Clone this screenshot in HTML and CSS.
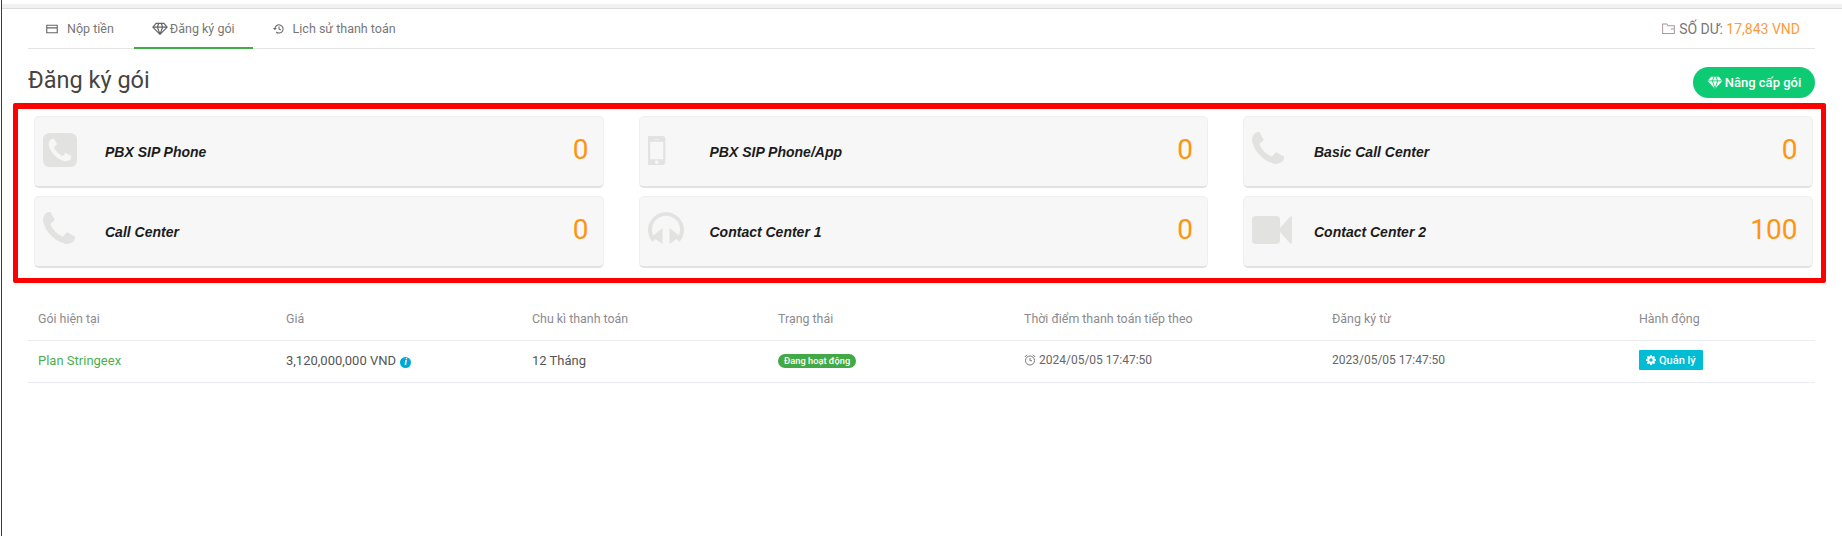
FILE: index.html
```html
<!DOCTYPE html>
<html lang="vi">
<head>
    <meta charset="UTF-8">
    <meta name="viewport" content="width=device-width, initial-scale=1.0">
    <title>Đăng ký gói</title>
    <link rel="stylesheet" href="styles.css">
</head>
<body>
    <svg class="icon-defs" width="0" height="0">
        <symbol id="i-phone" viewBox="192 128 1408 1408"><path d="M1600 1240q0 27-10 70.5t-21 68.5q-21 50-122 106-94 51-186 51-27 0-53-3.5t-57.5-12.5-47-14.5-55.5-20.5-49-18q-98-35-175-83-127-79-264-216t-216-264q-48-77-83-175-3-9-18-49t-20.5-55.5-14.5-47-12.5-57.5-3.5-53q0-92 51-186 56-101 106-122 25-11 68.5-21t70.5-10q14 0 21 3 18 6 53 76 11 19 30 54t35 63.5 31 53.5q3 4 17.5 25t21.5 35.5 7 28.5q0 20-28.5 50t-62 55-62 53-28.5 46q0 9 5 22.5t8.5 20.5 14 24 11.5 19q76 137 174 235t235 174q2 1 19 11.5t24 14 20.5 8.5 22.5 5q18 0 46-28.5t53-62 55-62 50-28.5q14 0 28.5 7t35.5 21.5 25 17.5q25 15 53.5 31t63.5 35 54 30q70 35 76 53 3 7 3 21z"/></symbol>
        <symbol id="i-diamond" viewBox="0 0 24 20"><path fill="none" stroke="currentColor" stroke-width="1.8" stroke-linejoin="round" d="M6 2h12l5 6-11 11L1 8zM1 8h22M8 8l4 11 4-11M8 8l2-6M16 8l-2-6"/></symbol>
        <symbol id="i-cog" viewBox="128 128 1536 1536"><path d="M1152 896q0-106-75-181t-181-75-181 75-75 181 75 181 181 75 181-75 75-181zm512-109v222q0 12-8 23t-20 13l-185 28q-19 54-39 91 35 50 107 138 10 12 10 25t-9 23q-27 37-99 108t-94 71q-12 0-26-9l-138-108q-44 23-91 38-16 136-29 186-7 28-36 28h-222q-14 0-24.5-8.5t-11.5-21.5l-28-184q-49-16-90-37l-141 107q-10 9-25 9-14 0-25-11-126-114-165-168-7-10-7-23 0-12 8-23 15-21 51-66.5t54-70.5q-27-50-41-99l-183-27q-13-2-21-12.5t-8-23.5v-222q0-12 8-23t19-13l186-28q14-46 39-92-40-57-107-138-10-12-10-24 0-10 9-23 26-36 98.5-107.5t94.5-71.5q13 0 26 10l138 107q44-23 91-38 16-136 29-186 7-28 36-28h222q14 0 24.5 8.5t11.5 21.5l28 184q49 16 90 37l142-107q9-9 24-9 13 0 25 10 129 119 165 170 7 8 7 22 0 12-8 23-15 21-51 66.5t-54 70.5q26 50 41 98l183 28q13 2 21 12.5t8 23.5z"/></symbol>
    </svg>

    <div class="top-band"></div>
    <div class="page">
        <div class="tabs">
            <div class="tab tab-first">
                <svg class="tab-icon" viewBox="0 0 16 12"><path fill="none" stroke="currentColor" stroke-width="1.5" d="M1 1h14v10H1zM1 4.500h14"/></svg>
                Nộp tiền
            </div>
            <div class="tab active">
                <svg class="tab-icon gem"><use href="#i-diamond"/></svg>
                Đăng ký gói
            </div>
            <div class="tab tab-last">
                <svg class="tab-icon" viewBox="0 0 16 16"><path fill="none" stroke="currentColor" stroke-width="1.4" d="M2.500 8a5.500 5.500 0 1 1 1.800 4M8 4.600V8l2.400 1.400"/><path fill="currentColor" d="M0 6.500h5L2.500 9.600z"/></svg>
                Lịch sử thanh toán
            </div>
            <div class="balance">
                <svg class="wallet" viewBox="0 0 14 12"><path fill="none" stroke="#a99" stroke-width="1.1" d="M.6 11.400V1h4.600l1.300 2h6.900v8.400zM9.500 6.500h4"/></svg>
                <span>SỐ DƯ: <span class="amount">17,843 VND</span></span>
            </div>
        </div>

        <div class="title-row">
            <h1>Đăng ký gói</h1>
            <div class="upgrade">
                <svg class="gem-solid" viewBox="0 0 24 20"><path fill="currentColor" d="M6 1h12l5.500 6.500L12 19.500.5 7.500z"/><path fill="none" stroke="#0ccb72" stroke-width="1.4" d="M.5 7.500h23M8 7.500l4 12 4-12M8 7.500L10.500 1M16 7.500L13.500 1"/></svg>
                Nâng cấp gói
            </div>
        </div>

        <div class="red-box">
            <div class="cards">
                <div class="card">
                    <svg class="card-icon square" viewBox="128 128 1536 1536"><path d="M1408 1193q0-11-2-16t-18-16.500-40.500-25-47.500-26.500-45.500-25-28.500-15q-5-3-19-13t-25-15-21-5q-15 0-36.500 20.500t-39.500 45-38.500 45-33.500 20.500q-7 0-16.500-3.500t-15.500-6.500-17-9.500-14-8.500q-99-55-170-126.500t-127-170.500q-2-3-8.500-14t-9.500-17-6.500-15.500-3.500-16.500q0-13 20.500-33.500t45-38.500 45-39.500 20.500-36.500q0-10-5-21t-15-25-13-19q-3-6-15-28.500t-25-45.500-26.500-47.500-25-40.500-16.500-18-16-2q-48 0-101 22-46 21-80 94.500t-34 130.500q0 16 2.500 34t5 30.500 9 33 10 29.500 12.500 33 11 30q60 164 216.500 320.500t320.500 216.500q6 2 30 11t33 12.500 29.500 10 33 9 30.500 5 34 2.500q57 0 130.500-34t94.500-80q22-53 22-101zm256-777v960q0 119-84.500 203.500t-203.500 84.500h-960q-119 0-203.500-84.500t-84.500-203.500v-960q0-119 84.500-203.500t203.500-84.500h960q119 0 203.500 84.500t84.500 203.500z"/></svg>
                    <span class="card-name">PBX SIP Phone</span>
                    <span class="card-num">0</span>
                </div>
                <div class="card">
                    <svg class="card-icon mobile" viewBox="512 256 768 1280" preserveAspectRatio="xMinYMid meet"><path d="M976 1408q0-33-23.500-56.500t-56.500-23.500-56.500 23.500-23.500 56.500 23.500 56.500 56.500 23.500 56.500-23.500 23.500-56.500zm208-160v-704q0-13-9.500-22.500t-22.500-9.500h-512q-13 0-22.500 9.500t-9.500 22.500v704q0 13 9.500 22.500t22.500 9.500h512q13 0 22.500-9.500t9.500-22.500zm-192-848q0-16-16-16h-160q-16 0-16 16t16 16h160q16 0 16-16zm288-16v1024q0 52-38 90t-90 38h-640q-52 0-90-38t-38-90v-1024q0-52 38-90t90-38h640q52 0 90 38t38 90z"/></svg>
                    <span class="card-name">PBX SIP Phone/App</span>
                    <span class="card-num">0</span>
                </div>
                <div class="card">
                    <svg class="card-icon phone"><use href="#i-phone"/></svg>
                    <span class="card-name">Basic Call Center</span>
                    <span class="card-num">0</span>
                </div>
                <div class="card">
                    <svg class="card-icon phone"><use href="#i-phone"/></svg>
                    <span class="card-name">Call Center</span>
                    <span class="card-num">0</span>
                </div>
                <div class="card">
                    <svg class="card-icon headset" viewBox="0 0 36 32"><path d="M18 0a18 18 0 0 1 13.500 29.900l-3-3A14 14 0 1 0 7.500 26.900l-3 3A18 18 0 0 1 18 0z"/><path d="M14.500 16v16L4 24.500zM21.500 16v16L32 24.500z"/></svg>
                    <span class="card-name">Contact Center 1</span>
                    <span class="card-num">0</span>
                </div>
                <div class="card">
                    <svg class="card-icon video" viewBox="0 0 40 28"><rect width="28" height="28" rx="4"/><path d="M28 12 38 .8q2-1 2 1v24.400q0 2-2 1L28 16z"/></svg>
                    <span class="card-name">Contact Center 2</span>
                    <span class="card-num">100</span>
                </div>
            </div>
        </div>

        <table class="plans">
            <thead>
                <tr>
                    <th class="c1">Gói hiện tại</th>
                    <th class="c2">Giá</th>
                    <th class="c3">Chu kì thanh toán</th>
                    <th class="c4">Trạng thái</th>
                    <th class="c5">Thời điểm thanh toán tiếp theo</th>
                    <th class="c6">Đăng ký từ</th>
                    <th>Hành động</th>
                </tr>
            </thead>
            <tbody>
                <tr>
                    <td><span class="plan-name">Plan Stringeex</span></td>
                    <td>3,120,000,000 VND<span class="info">i</span></td>
                    <td>12 Tháng</td>
                    <td><span class="status">Đang hoạt động</span></td>
                    <td class="date">
                        <svg class="clock" viewBox="0 0 12 12"><circle cx="6" cy="6.500" r="4.500" fill="none" stroke="#777" stroke-width="1"/><path fill="none" stroke="#777" d="M6 4v2.700h2M.8 3 3 .8M11.200 3 9 .8"/></svg>
                        2024/05/05 17:47:50
                    </td>
                    <td class="date">2023/05/05 17:47:50</td>
                    <td><span class="manage"><svg class="cog"><use href="#i-cog"/></svg> Quản lý</span></td>
                </tr>
            </tbody>
        </table>
    </div>
</body>
</html>
```

FILE: styles.css
```css
* {
    box-sizing: border-box;
}

html, body {
    height: 100%;
}

body {
    margin: 0 0 0 1px;
    font-family: Roboto, "Liberation Sans", Arial, sans-serif;
    font-size: 13px;
    color: #555;
    background: #fff;
    border-left: 1px solid #1f3f6f;
    overflow: hidden;
}

.icon-defs {
    position: absolute;
}

.top-band {
    height: 5px;
    margin-top: 4px;
    background: #f1f1f1;
    border-bottom: 1px solid #ddd;
}

.page {
    padding: 0 27px 0 26px;
}

.tabs {
    display: flex;
    align-items: center;
    height: 40px;
    border-bottom: 1px solid #e4e4e4;
    color: #777;
    font-size: 12.5px;
}

.tab {
    display: flex;
    align-items: center;
    height: 40px;
    padding: 0 18px;
    gap: 9px;
}

.tab-first {
    padding-right: 20px;
}

.tab-last {
    padding-left: 20px;
    gap: 8px;
}

.tab.active {
    border-bottom: 2px solid #3fae49;
    gap: 2px;
    margin-bottom: -1px;
}

.tab-icon {
    width: 12px;
    height: 12px;
    color: #666;
}

.tab-icon.gem {
    width: 16px;
    height: 13px;
}

.balance {
    margin-left: auto;
    margin-right: 15px;
    display: flex;
    align-items: center;
    gap: 4px;
    font-size: 14px;
}

.wallet {
    width: 13px;
    height: 11px;
}

.amount {
    color: #ff9a3c;
}

.title-row {
    display: flex;
    align-items: flex-start;
    justify-content: space-between;
    height: 54px;
}

h1 {
    margin: 17px 0 0;
    font-size: 23.5px;
    font-weight: 400;
    color: #444;
}

.upgrade {
    display: flex;
    align-items: center;
    gap: 2px;
    height: 31px;
    width: 122px;
    margin-top: 18px;
    justify-content: center;
    border-radius: 16px;
    background: #0ccb72;
    color: #fff;
    font-weight: 500;
}

.gem-solid {
    width: 16px;
    height: 13px;
}

.red-box {
    margin: 0 -11px 0 -15px;
    height: 180px;
    border: 5px solid #ff0000;
    border-top-width: 6px;
    border-radius: 2px;
    padding: 7px 10px 0 16px;
}

.cards {
    display: grid;
    grid-template-columns: repeat(3, 569.5px);
    grid-auto-rows: 72px;
    column-gap: 35px;
    row-gap: 8px;
}

.card {
    display: flex;
    align-items: center;
    padding: 0 14px 0 8px;
    background: #f7f7f7;
    border: 1px solid #efefef;
    border-bottom: 2px solid #e2e2e2;
    border-radius: 5px;
}

.card-icon {
    flex: none;
    fill: #e2e2e0;
}

.square {
    width: 34px;
    height: 34px;
    margin: -4px 28px 0 0;
}

.mobile {
    width: 34px;
    height: 29px;
    margin: -3px 28px 0 0;
}

.phone {
    width: 32px;
    height: 32px;
    margin: -7px 30px 0 0;
}

.headset {
    width: 36px;
    height: 32px;
    margin: -7px 26px 0 0;
}

.video {
    width: 40px;
    height: 28px;
    margin: -4px 22px 0 0;
}

.card-name {
    flex: 1;
    font-family: "Liberation Sans", Arial, sans-serif;
    font-size: 14px;
    font-weight: 700;
    font-style: italic;
    color: #1c1c1c;
}

.card-num {
    font-size: 28px;
    color: #ff9410;
    margin-top: -4px;
}

.plans {
    width: 100%;
    margin-top: 18px;
    border-collapse: collapse;
    table-layout: fixed;
}

.plans th {
    height: 39px;
    padding: 0 10px 4px;
    text-align: left;
    font-size: 12.4px;
    font-weight: 400;
    color: #8b8b90;
    border-bottom: 1px solid #ebebf2;
}

.plans td {
    height: 42px;
    padding: 0 10px 2px;
    color: #555;
    border-bottom: 1px solid #ebebf2;
}

.plans td.date {
    font-size: 12px;
    color: #666;
}

.c1 { width: 248px; }
.c2 { width: 246px; }
.c3 { width: 246px; }
.c4 { width: 246px; }
.c5 { width: 308px; }
.c6 { width: 307px; }

.plan-name {
    color: #4caf50;
}

.info {
    display: inline-block;
    width: 11px;
    height: 11px;
    margin-left: 4px;
    border-radius: 50%;
    background: #00a9d4;
    color: #fff;
    font-size: 9px;
    font-weight: 700;
    font-style: italic;
    line-height: 11px;
    text-align: center;
}

.status {
    display: inline-block;
    height: 14px;
    padding: 0 6px;
    border-radius: 7px;
    background: #43a947;
    color: #fff;
    font-size: 9.3px;
    font-weight: 500;
    line-height: 14px;
    vertical-align: middle;
}

.clock {
    width: 12px;
    height: 12px;
    vertical-align: -2px;
}

.manage {
    display: inline-flex;
    align-items: center;
    gap: 3px;
    height: 20px;
    padding: 0 7px;
    border-radius: 1px;
    background: #00bcd4;
    color: #fff;
    font-size: 11px;
    font-weight: 500;
    vertical-align: middle;
}

.cog {
    width: 10px;
    height: 10px;
    fill: #fff;
}
```
